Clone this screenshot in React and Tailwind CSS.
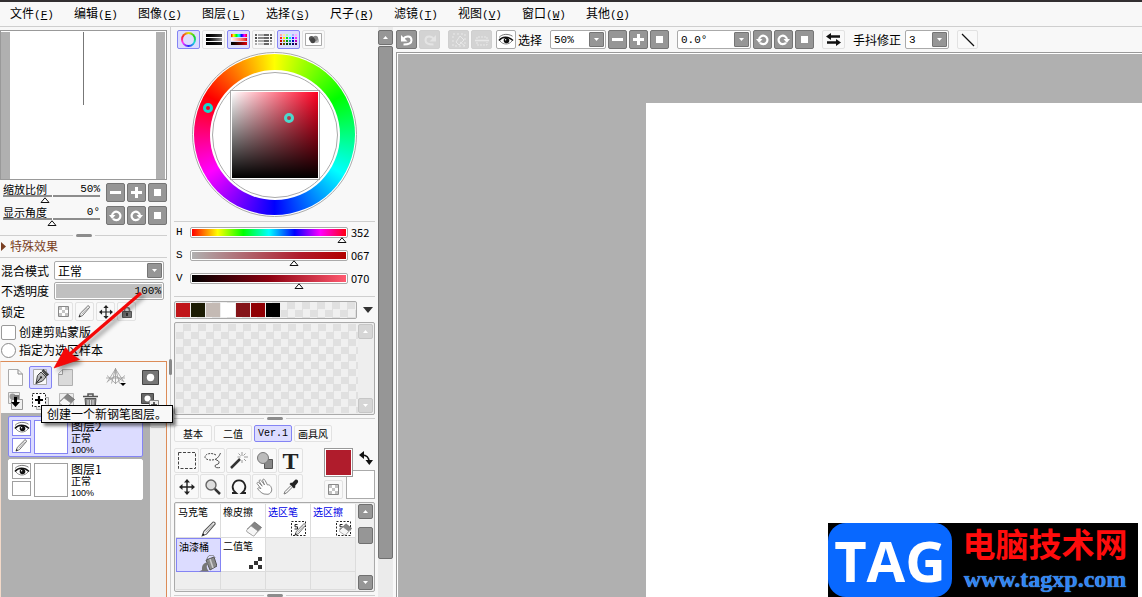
import React from "react";
import { clsx } from "clsx";

const MONO = "font-['Liberation_Mono','Noto_Sans_CJK_SC',monospace] text-[11px]";

/* ---------- icons ---------- */
function Svg({ w = 16, h = 16, className, children }) {
  return (
    <svg width={w} height={h} viewBox={`0 0 ${w} ${h}`} className={clsx("shrink-0", className)} fill="none" aria-hidden="true">
      {children}
    </svg>
  );
}

const Minus = () => (<Svg w={11} h={11}><path d="M0 4h11v3H0z" fill="#fff" /></Svg>);
const Plus = () => (<Svg w={11} h={11}><path d="M0 4h4V0h3v4h4v3H7v4H4V7H0z" fill="#fff" /></Svg>);
const Stop = () => (<Svg w={11} h={11}><path d="M2 2h7v7H2z" fill="#fff" /></Svg>);
const RotateL = () => (
  <Svg w={13} h={13}><path d="M3 6.500a4.200 4.200 0 1 1 1 3.200" stroke="#fff" strokeWidth="2.200" /><path d="M0 6h6.500L3.200 10z" fill="#fff" /></Svg>
);
const RotateR = () => (
  <Svg w={13} h={13}><path d="M10 6.500a4.200 4.200 0 1 0-1 3.200" stroke="#fff" strokeWidth="2.200" /><path d="M13 6H6.500l3.300 4z" fill="#fff" /></Svg>
);
const Undo = ({ flip, color = "#fff" }) => (
  <Svg w={14} h={12} className={flip ? "-scale-x-100" : ""}>
    <path d="M1 1v6.500h6.500z" fill={color} />
    <path d="M3 5.500C5.500 1.500 11.500 1.500 11.500 6.200c0 2.800-2 4.300-8 4.300" stroke={color} strokeWidth="2" />
  </Svg>
);
const Eye = () => (
  <Svg w={16} h={13}>
    <path d="M1 4.500C4 .8 10 .4 14.500 3.200" stroke="#777" />
    <path d="M1 7.500C4 3.500 10.500 3 15 7.500" stroke="#111" strokeWidth="1.600" />
    <path d="M2 8c3 4 9 4 12 0" stroke="#888" />
    <circle cx="8.500" cy="7.500" r="2.800" fill="#111" />
    <circle cx="7.600" cy="6.700" r=".7" fill="#fff" />
  </Svg>
);
const Pencil = ({ size = 14 }) => (
  <svg width={size} height={size} viewBox="0 0 14 14" fill="none" aria-hidden="true">
    <path d="M1 13l1.500-4L10.500 1c.8-.6 2.300.8 1.800 1.800L4.800 11.500z" fill="#f4f4f4" stroke="#555" strokeWidth=".9" />
    <path d="M1 13l.8-2.200 1.400 1.400z" fill="#111" />
    <path d="M4 10l6.500-7" stroke="#999" strokeWidth=".8" />
  </svg>
);
const Move = ({ size = 14 }) => (
  <svg width={size} height={size} viewBox="0 0 16 16" aria-hidden="true">
    <path d="M7.300 3v4.300H3v1.400h4.300V13h1.400V8.700H13V7.300H8.700V3z" fill="#222" />
    <path d="M8 0l3 3.500H5zM8 16l3-3.500H5zM0 8l3.500-3v6zM16 8l-3.500-3v6z" fill="#222" />
  </svg>
);
const Checker = () => (
  <Svg w={11} h={11}>
    <path d="M.5.5h10v10H.5z" fill="#fff" stroke="#888" />
    <path d="M1 1h3v3H1zM7 1h3v3H7zM4 4h3v3H4zM1 7h3v3H1zM7 7h3v3H7z" fill="#c4c4c4" />
  </Svg>
);
const Lock = () => (
  <Svg w={12} h={12}><path d="M3.500 6V4a2.500 2.500 0 0 1 5 0v2" stroke="#777" strokeWidth="1.600" /><path d="M1.500 5.500h9v6h-9z" fill="#777" stroke="#555" /><path d="M6 7v3" stroke="#222" strokeWidth="1.600" /></Svg>
);
const Page = ({ dim }) => (
  <Svg w={16} h={17}>
    {dim ? (
      <>
        <path d="M.5 4.500l4-4h10v16H.5z" fill="#dadada" stroke="#b0b0b0" />
        <path d="M.5 5.500h4v-5" fill="#eee" stroke="#999" />
      </>
    ) : (
      <>
        <path d="M.5.5h9.500l4.500 4.500v11.500H.5z" fill="#fcfcfc" stroke="#aaa" />
        <path d="M10 .5V5h4.500" stroke="#888" />
      </>
    )}
  </Svg>
);
const PenLayer = () => (
  <Svg w={18} h={18}>
    <path d="M1.500 1.500h13v15h-13z" fill="#fafafa" stroke="#aaa" />
    <path d="M11.500 1L17 6.500l-2.500 2L9.500 3z" fill="#333" />
    <path d="M11 2.800l4 4M12.200 1.800l4 4" stroke="#999" strokeWidth=".6" />
    <path d="M4 15.500l1.500-8L9 4l5 5-3.500 4z" fill="#b8b8b8" stroke="#444" />
    <path d="M4 15.500l4.500-5.500" stroke="#222" /><circle cx="9" cy="9.300" r="1.100" fill="#222" />
  </Svg>
);
const Perspective = () => (
  <Svg w={20} h={20}>
    <path d="M9.500 1v16M0 11h19M1 15.500L9.500 2 18 15M5.500 16.500l4-15 4 15M1 8.500l8.500 8L19 8.500M2 14l7.500-5 7.500 5" stroke="#999" strokeWidth=".8" />
    <path d="M14 16h6l-3 3z" fill="#000" />
  </Svg>
);
const Mask = () => (
  <Svg w={17} h={15}><path d="M.5.5h16v14H.5z" fill="#777" stroke="#444" /><circle cx="8.500" cy="7.500" r="3.700" fill="#fff" /></Svg>
);
const Transfer = () => (
  <Svg w={15} h={18}>
    <path d="M.5.500h11v11H.5z" fill="#eee" stroke="#aaa" /><circle cx="4.500" cy="4.500" r="3" fill="#999" /><path d="M6 3h5v4H6z" fill="#777" />
    <path d="M3.500 7.500h11v10h-11z" fill="#f0f0f0" stroke="#999" />
    <path d="M6 5h3v5h3l-4.500 5L3 10h3z" fill="#000" />
  </Svg>
);
const Merge = () => (
  <Svg w={17} h={17}>
    <path d="M4.500 4.500h12v12h-12z" fill="#e6e6e6" stroke="#aaa" /><path d="M.5.5h13v13H.5z" fill="#fff" stroke="#222" strokeDasharray="2 1.500" />
    <path d="M7 3v8M3 7h8" stroke="#000" strokeWidth="2.200" />
  </Svg>
);
const EraserShape = () => (
  <>
    <path d="M8.500 1l7 5.500-7 7L1.500 8z" fill="#858585" stroke="#666" strokeWidth=".8" />
    <path d="M5 4.800L12 10l-3.500 4.500c-.6.600-1.200.6-2 0L1 10.800c-.7-.6-.7-1.200 0-2z" fill="#f6f6f6" stroke="#888" strokeWidth=".8" />
    <path d="M9 14L12.200 10l3-3v1.500z" fill="#ccc" />
  </>
);
const Eraser = ({ size = 16 }) => (
  <svg width={size} height={size} viewBox="0 0 16 16" fill="none" aria-hidden="true"><EraserShape /></svg>
);
const PageEraser = () => (
  <Svg w={16} h={17}><path d="M.5.500h14v16H.5z" fill="#eee" stroke="#bbb" /><EraserShape /></Svg>
);
const Trash = () => (
  <Svg w={15} h={17}><path d="M0 3.500h15M5 3V1h5v2" stroke="#555" strokeWidth="1.500" /><path d="M2 5.500h11l-1 11H3z" fill="#888" stroke="#555" /><path d="M5 7v9M7.500 7v9M10 7v9" stroke="#ddd" /></Svg>
);
const MaskAdd = () => (
  <Svg w={19} h={17}><path d="M.5.5h12v10H.5z" fill="#666" stroke="#444" /><circle cx="6.500" cy="5.500" r="3" fill="#fff" /><path d="M8.500 7.500h9v9h-9z" fill="#eee" stroke="#888" /><path d="M13 9v6M10 12h6" stroke="#333" strokeWidth="1.500" /></Svg>
);

/* color panel toggles */
const RingIcon = () => (
  <span className="grid size-[15px] place-items-center rounded-full bg-[conic-gradient(#dfe000,#19d219,#19dada,#2a2aff,#ff37ff,#ff2020,#dfe000)]">
    <span className="size-[11px] rounded-full bg-[#dedcff]" />
  </span>
);
const Bars = () => (
  <span className="flex w-4 flex-col gap-px">
    <i className="h-[3px] bg-linear-to-r from-black to-[#444]" />
    <i className="h-[3px] bg-linear-to-r from-black to-[#999]" />
    <i className="h-[3px] bg-linear-to-r from-black to-[#222]" />
  </span>
);
const ColorBars = () => (
  <span className="flex w-4 flex-col gap-px">
    <i className="h-[3px] bg-[linear-gradient(90deg,red,yellow,lime,cyan,blue,magenta,red)]" />
    <i className="h-[3px] bg-linear-to-r from-white to-red-600" />
    <i className="h-[3px] bg-linear-to-r from-black to-red-600" />
  </span>
);
const MixBars = () => (
  <Svg w={17} h={11}>
    {[0, 3, 6, 9].map((y, i) => (
      <g key={y}>
        <path d={`M0 ${y}h2v2H0zM15 ${y}h2v2h-2z`} fill={["#666", "#444", "#888", "#aaa"][i]} />
        <path d={`M3 ${y}h6v2H3z`} fill={["#aaa", "#888", "#aaa", "#ccc"][i]} />
        <path d={`M9 ${y}h5v2H9z`} fill="#666" />
      </g>
    ))}
  </Svg>
);
const DOTS = [
  ["#faa", "#fe9", "#afa", "#aff", "#aaf", "#faf"],
  ["#f22", "#fe0", "#0e0", "#0ee", "#22f", "#f2f"],
  ["#c00", "#a90", "#090", "#099", "#00b", "#b0b"],
  ["#700", "#550", "#040", "#044", "#006", "#404"],
];
const DotGrid = () => (
  <Svg w={17} h={11}>
    {DOTS.map((row, r) => row.map((c, i) => <rect key={`${r}${i}`} x={i * 3} y={r * 3} width="2" height="2" fill={c} />))}
  </Svg>
);
const Scratch = () => (
  <Svg w={17} h={13}>
    <path d="M.5.5h16v12H.5z" fill="#fff" stroke="#aaa" />
    <circle cx="11.500" cy="7.500" r="2.500" fill="#bbb" /><circle cx="10.500" cy="5.300" r="2.600" fill="#888" /><circle cx="6.500" cy="5.500" r="2.600" fill="#555" /><circle cx="7.800" cy="7.600" r="2.600" fill="#444" />
  </Svg>
);

/* tools */
const Marquee = () => (<Svg w={18} h={17}><path d="M.5.5h17v16H.5z" stroke="#444" strokeDasharray="3 1.500" /></Svg>);
const Lasso = () => (
  <Svg w={18} h={17}><path d="M12 3C7 0 1 2 1 5s7 4 11 2" stroke="#444" strokeDasharray="2 1" /><path d="M16.500 1c-1 3-3 5-5 6.500 2 1 4 1.500 3.500 3.500s-4 1-4 3 3 2 5 1.500" stroke="#555" /></Svg>
);
const Wand = () => (
  <Svg w={18} h={17}><path d="M1 16L10 7" stroke="#333" strokeWidth="2.500" /><path d="M12 0v4M12 8v3M7.500 5h3M14 5h4M8.500 1.500l2 2M15.500 1.500l-2 2M14 7l2 2" stroke="#999" /></Svg>
);
const Shapes = () => (<Svg w={18} h={17}><path d="M8.500 7.500h8v9h-8z" fill="#888" stroke="#555" /><circle cx="7" cy="6" r="5.500" fill="#bbb" stroke="#777" /></Svg>);
const TextTool = () => (<span className="font-['Liberation_Serif',serif] text-2xl leading-none font-bold text-[#222]">T</span>);
const Magnify = () => (<Svg><circle cx="6" cy="6" r="5" fill="#ddd" stroke="#666" strokeWidth="1.400" /><path d="M9.800 9.800L15 15" stroke="#333" strokeWidth="2.500" /></Svg>);
const RotateView = () => (<Svg><path d="M1 14h4c-3-2.500-4-5-3-8C4-.2 12-.2 14 6c1 3 0 5.500-3 8h4" stroke="#222" strokeWidth="1.800" /></Svg>);
const Hand = () => (
  <Svg w={17} h={17}><path d="M8 16C5 15 3 12.500 1.500 10.500c.5-1 2-.8 3.500.3L1 5.500C1 4 2.200 4 3.200 5l3 3.200L3 3c.2-1.500 1.600-1.300 2.400-.2L8.600 7 6.500 2c.5-1.300 1.900-1 2.500.3L11.500 7c1-.5 2.500 0 3.300 1.500.9 1.900 1.200 3 .7 4.500-.5 1.600-1.500 2.800-3.500 3.300z" fill="#fff" stroke="#888" /></Svg>
);
const Dropper = () => (<Svg><path d="M9 4l3-3c2-1.500 4 1 2.700 2.700L12 7l.5 1-1.500 1.500L6.500 5 8 3.500z" fill="#222" /><path d="M8 6.500L2 12.500 1 15l2.500-1 6-6" stroke="#777" /></Svg>);
const SwapColors = () => (
  <Svg w={14} h={14}><path d="M3 4c5 0 7 2 7 7" stroke="#111" strokeWidth="1.500" /><path d="M0 4l5-4v8zM6.500 9h7.500l-3.700 5z" fill="#111" /></Svg>
);
const Bucket = () => (
  <Svg w={18} h={17}><path d="M7 5l8-3 3 9-7 4z" fill="#8a8a8a" stroke="#555" /><path d="M11 4l3 9" stroke="#ccc" strokeWidth="1.500" /><path d="M8 4c1-5 7-5 8-1" stroke="#777" /><path d="M10 7C3 8 3 11 3 15l-3 1.500h10C7 13 7 10 10 7z" fill="#777" /></Svg>
);
const SelMark = ({ children }) => (
  <span className="relative grid size-4 place-items-center">
    <Svg w={16} h={16}><path d="M.5.5h14v14H.5z" stroke="#222" strokeDasharray="2 1.500" /><path d="M6.500 3.500H4v2.300h2.500V8H3.500" stroke="#222" /></Svg>
    <span className="absolute top-0.5 left-[3px]">{children}</span>
  </span>
);
const Binary = () => (<Svg w={13} h={12}><path d="M9 0h4v4H9zM5 4h4v4H5zM0 8h4v4H0zM9 8h4v4H9z" fill="#333" /></Svg>);

/* ---------- controls ---------- */
function DarkButton({ label, children, faded, wide }) {
  return (
    <button
      type="button"
      aria-label={label}
      disabled={faded}
      className={clsx(
        "grid h-[19px] shrink-0 place-items-center rounded-xs border",
        wide ? "w-[21px]" : "w-[19px]",
        faded ? "border-[#cfcfcf] bg-[#d3d3d3]" : "border-[#757575] bg-[#969696]"
      )}
    >
      {children}
    </button>
  );
}

function FlatButton({ label, children, active, className }) {
  return (
    <button
      type="button"
      aria-label={label}
      className={clsx("grid shrink-0 place-items-center rounded-xs border", active ? "border-[#8484f4] bg-[#dcdcff]" : "border-[#e2e2e2] bg-[#f9f9f9]", className)}
    >
      {children}
    </button>
  );
}

function Select({ label, value, className, textClass }) {
  return (
    <span className={clsx("relative h-[19px] shrink-0 rounded-xs border border-[#aaa] bg-white", className)}>
      <select aria-label={label} defaultValue={value} className={clsx("block h-full w-full appearance-none bg-transparent pl-[3px] leading-4 outline-none", textClass)}>
        <option>{value}</option>
      </select>
      <span className="pointer-events-none absolute top-px right-px grid size-[15px] place-items-center rounded-[1px] border border-[#757575] bg-[#969696]">
        <Svg w={5} h={3}><path d="M0 0h5L2.500 3z" fill="#fff" /></Svg>
      </span>
    </span>
  );
}

function Range({ label, value, max, className, children }) {
  return (
    <span className={clsx("relative block", className)}>
      {children}
      <svg width="10" height="6" viewBox="0 0 10 6" className="absolute top-full -ml-[5px]" style={{ left: `${(value / max) * 100}%` }} aria-hidden="true">
        <path d="M5 .8L9 5.500H1z" fill="#fff" stroke="#111" />
      </svg>
      <input type="range" aria-label={label} defaultValue={value} max={max} className="absolute inset-0 h-full w-full cursor-pointer opacity-0" />
    </span>
  );
}

function Grip({ className }) {
  return (
    <div className={clsx("flex h-[3px] items-center gap-[3px]", className)}>
      <i className="h-px flex-1 bg-[#cfcfcf]" />
      <i className="h-[3px] w-4 rounded-full bg-[#8c8c8c]" />
      <i className="h-px flex-1 bg-[#cfcfcf]" />
    </div>
  );
}

function ScrollArrow({ down, dim }) {
  return (
    <button
      type="button"
      aria-label={down ? "向下滚动" : "向上滚动"}
      className={clsx("grid h-[15px] w-[15px] shrink-0 place-items-center rounded-xs border", dim ? "border-[#c6c6c6] bg-[#d6d6d6]" : "border-[#707070] bg-[#969696]")}
    >
      <Svg w={5} h={3} className={down ? "rotate-180" : ""}><path d="M0 3h5L2.500 0z" fill="#fff" /></Svg>
    </button>
  );
}

/* ---------- menu ---------- */
const MENUS = [["文件", "F"], ["编辑", "E"], ["图像", "C"], ["图层", "L"], ["选择", "S"], ["尺子", "R"], ["滤镜", "T"], ["视图", "V"], ["窗口", "W"], ["其他", "O"]];

function MenuBar() {
  return (
    <nav className="flex h-[27px] shrink-0 items-center border-t-2 border-b border-t-[#322f31] border-b-[#cfcfcf]">
      {MENUS.map(([name, key]) => (
        <button key={key} type="button" className="w-16 whitespace-nowrap">
          {name}<span className={MONO}>(<u>{key}</u>)</span>
        </button>
      ))}
    </nav>
  );
}

/* ---------- navigator and layers ---------- */
function NavRow({ label, value, pos, children }) {
  return (
    <div className="flex h-5 justify-between pl-[3px]">
      <div className="w-[97px]">
        <div className="flex h-3 items-center justify-between text-[11px]">
          <span>{label}</span><span className={MONO}>{value}</span>
        </div>
        <Range label={label} value={pos} max={100} className="h-0.5 bg-[#8d8d8d]">
          <i className="absolute left-1/2 h-0.5 w-px bg-white" />
        </Range>
      </div>
      <div className="flex gap-0.5">{children}</div>
    </div>
  );
}

function LayerItem({ name, active, pencil }) {
  const edge = active ? "border-[#8484f4]" : "border-[#a0a0a0]";
  return (
    <li className={clsx("flex h-[41px] w-[135px] gap-[3px] rounded-xs border p-[3px]", active ? "border-[#8484f4] bg-[#dcdcff]" : "border-white bg-white")}>
      <div className="flex flex-col gap-0.5">
        <button type="button" aria-label={`显示${name}`} className={clsx("grid h-4 w-[19px] place-items-center border bg-white", edge)}><Eye /></button>
        <button type="button" aria-label={`编辑${name}`} className={clsx("grid h-4 w-[19px] place-items-center border bg-white", edge)}>{pencil && <Pencil size={13} />}</button>
      </div>
      <span className={clsx("h-[34px] w-[34px] border bg-white", edge)} />
      <div className="flex flex-col leading-3">
        <span>{name}</span>
        <span className="text-[10px]">正常</span>
        <span className="font-['Liberation_Sans',sans-serif] text-[9px]">100%</span>
      </div>
    </li>
  );
}

function LeftPanel() {
  return (
    <aside className="flex w-[170px] shrink-0 flex-col pt-[3px] pr-[3px]">
      <div className="flex h-[150px] shrink-0 border border-[#999] bg-white pt-px pr-px">
        <div className="flex flex-1 bg-[#b0b0b0] px-[9px]">
          <div className="flex-1 bg-white"><div className="mx-auto h-[73px] w-px bg-[#777]" /></div>
        </div>
      </div>
      <div className="mt-[3px] flex flex-col gap-[3px]">
        <NavRow label="缩放比例" value="50%" pos={43}>
          <DarkButton label="缩小"><Minus /></DarkButton><DarkButton label="放大"><Plus /></DarkButton><DarkButton label="重置缩放"><Stop /></DarkButton>
        </NavRow>
        <NavRow label="显示角度" value="0°" pos={50}>
          <DarkButton label="向左旋转"><RotateL /></DarkButton><DarkButton label="向右旋转"><RotateR /></DarkButton><DarkButton label="重置角度"><Stop /></DarkButton>
        </NavRow>
      </div>
      <Grip className="mt-2 shrink-0" />
      <button type="button" className="flex h-5 shrink-0 items-center gap-1 pb-0.5 pl-px text-[#7a3f22]">
        <Svg w={5} h={9}><path d="M0 0l5 4.500L0 9z" fill="#7a3f22" /></Svg>特殊效果
      </button>
      <div className="flex shrink-0 flex-col gap-0.5 border-t border-[#cfcfcf] pt-[3px] pr-[3px] pl-px">
        <div className="flex items-center justify-between">
          <span>混合模式</span><Select label="混合模式" value="正常" className="w-[110px]" />
        </div>
        <div className="flex items-center justify-between">
          <span>不透明度</span>
          <span className="relative flex h-[18px] w-[110px] items-center justify-end rounded-xs border border-[#aaa] bg-white p-px">
            <span className={clsx(MONO, "flex h-full flex-1 items-center justify-end bg-[#c0c0c0] pr-px")}>100%</span>
            <input type="range" aria-label="不透明度" defaultValue={100} className="absolute inset-0 h-full w-full opacity-0" />
          </span>
        </div>
        <div className="flex items-center gap-0.5">
          <span className="w-[51px]">锁定</span>
          <FlatButton label="锁定透明" className="size-[19px]"><Checker /></FlatButton>
          <FlatButton label="锁定绘图" className="size-[19px]"><Pencil size={13} /></FlatButton>
          <FlatButton label="锁定移动" className="size-[19px]"><Move /></FlatButton>
          <FlatButton label="全部锁定" className="size-[19px]"><Lock /></FlatButton>
        </div>
        <div>
          <label className="flex h-[18px] items-center gap-[3px]"><input type="checkbox" className="size-[15px] appearance-none rounded-xs border border-[#999] bg-white" />创建剪贴蒙版</label>
          <label className="flex h-[18px] items-center gap-[3px]"><input type="radio" className="size-[15px] appearance-none rounded-full border border-[#888] bg-white" />指定为选区样本</label>
        </div>
      </div>
      <section className="mt-0.5 flex min-h-0 flex-1 flex-col border border-b-0 border-[#dc8c58] border-l-[#f3d9c8]">
        <div className="flex h-[27px] shrink-0 items-center pt-[3px] pl-1">
          <button type="button" aria-label="新建图层" className="grid h-[23px] w-6 pt-[3px] pl-[3px]"><Page /></button>
          <FlatButton label="创建一个新钢笔图层" active className="h-[23px] w-[23px]"><PenLayer /></FlatButton>
          <button type="button" aria-label="新建图层组" className="grid h-[23px] w-6 pt-[3px] pl-1.5"><Page dim /></button>
          <button type="button" aria-label="透视尺" className="ml-[30px]"><Perspective /></button>
          <button type="button" aria-label="图层蒙版" className="ml-4"><Mask /></button>
        </div>
        <div className="flex h-6 shrink-0 items-center pl-[7px]">
          <button type="button" aria-label="转写"><Transfer /></button>
          <button type="button" aria-label="合并" className="ml-[9px]"><Merge /></button>
          <button type="button" aria-label="清除" className="ml-2.5"><PageEraser /></button>
          <button type="button" aria-label="删除" className="ml-2"><Trash /></button>
          <button type="button" aria-label="添加蒙版" className="ml-[43px]"><MaskAdd /></button>
        </div>
        <div className="flex min-h-0 flex-1">
          <ul className="flex flex-1 flex-col gap-0.5 bg-[#b0b0b0] pt-[3px] pl-[7px]">
            <LayerItem name="图层2" active pencil />
            <LayerItem name="图层1" />
          </ul>
          <div className="w-4 bg-[#f0f0f0]"><div className="h-[15px] rounded-xs border border-[#cfcfcf] bg-[#ddd]" /></div>
        </div>
      </section>
    </aside>
  );
}

/* ---------- colour and brush panel ---------- */
function ColorWheel() {
  return (
    <div className="mx-auto mt-[3px] grid size-[165px] shrink-0 place-items-center rounded-full border border-[#aaa] bg-white">
      <div className="grid size-[161px] place-items-center rounded-full bg-[conic-gradient(#ff0,#0f0,#0ff,#00f,#f0f,#f00,#ff0)]">
        <div className="grid size-[130px] place-items-center rounded-full bg-white">
          <div className="grid size-[126px] place-items-center rounded-full border border-[#aaa]">
            <div className="size-[90px] border border-[#aaa] bg-white p-px">
              <div className="relative size-full bg-[linear-gradient(to_top,#000,transparent),linear-gradient(to_right,#fff,#ff0022)]">
                <i className="absolute top-[31%] left-[67%] size-[10px] -translate-x-1/2 -translate-y-1/2 rounded-full border-[3px] border-[#4cd8cc]" />
              </div>
            </div>
          </div>
        </div>
        <i className="absolute -mt-[53px] -ml-[134px] size-[10px] rounded-full border-[3px] border-[#14d8cc]" />
      </div>
    </div>
  );
}

const CHANNELS = [
  ["H", "352", 97, "bg-[linear-gradient(90deg,red,yellow,lime,cyan,blue,magenta,#f01)]"],
  ["S", "067", 66, "bg-[linear-gradient(90deg,#b0b0b0,#b01c2c_70%,#b20000)]"],
  ["V", "070", 69, "bg-[linear-gradient(90deg,#000,#8c0010_50%,#ff5a70)]"],
];
const SWATCHES = ["bg-[#c01418]", "bg-[#1c1c04]", "bg-[#c4bab4]", "bg-white", "bg-[#841418]", "bg-[#900004]", "bg-black"];
const CHECKS = "bg-[repeating-conic-gradient(#e0e0e0_0_25%,#f0f0f0_0_50%)] bg-size-[15px_15px]";
const TOGGLES = [["色轮", RingIcon, true], ["RGB滑块", Bars], ["HSV滑块", ColorBars, true], ["中间色", MixBars], ["调色板", DotGrid, true], ["便笺", Scratch]];
const TOOLS = [["选框", Marquee], ["套索", Lasso], ["魔棒", Wand], ["形状", Shapes], ["文字", TextTool], ["移动", () => <Move size={16} />], ["缩放", Magnify], ["旋转", RotateView], ["抓手", Hand], ["吸管", Dropper]];
const BRUSHES = [
  ["马克笔", <Pencil size={16} />],
  ["橡皮擦", <Eraser />],
  ["选区笔", <SelMark><Pencil size={13} /></SelMark>, "link"],
  ["选区擦", <SelMark><Eraser size={13} /></SelMark>, "link"],
  ["油漆桶", <Bucket />, "active"],
  ["二值笔", <Binary />],
];

function MiddlePanel() {
  return (
    <section className="flex w-[208px] shrink-0 flex-col border-l border-[#cfcfcf] pt-[3px] pr-[3px] pl-[3px]">
      <div className="flex shrink-0 gap-0.5 pl-[3px]">
        {TOGGLES.map(([label, Icon, on]) => (
          <FlatButton key={label} label={label} active={on} className="h-[19px] w-[23px]"><Icon /></FlatButton>
        ))}
      </div>
      <ColorWheel />
      <div className="mt-1 border-t border-[#cfcfcf] pb-[5px]">
        {CHANNELS.map(([name, value, pos, fill]) => (
          <div key={name} className="flex h-[23px] items-start pt-[5px]">
            <span className={clsx(MONO, "w-4 pl-0.5 leading-[11px]")}>{name}</span>
            <Range label={name} value={pos} max={100} className="h-[11px] w-[158px] rounded-xs border border-[#aaa] bg-white p-px">
              <i className={clsx("block h-full", fill)} />
            </Range>
            <span className="pl-[3px] text-[11px] leading-[10px]">{value}</span>
          </div>
        ))}
      </div>
      <div className="flex items-center gap-1.5 border-t border-[#cfcfcf] pt-1">
        <div className={clsx("flex h-[18px] w-[183px] rounded-xs border border-[#aaa] p-px", CHECKS)}>
          {SWATCHES.map((c) => <button key={c} type="button" aria-label="色板颜色" className={clsx("w-[15px] border-r border-[#eee]", c)} />)}
        </div>
        <button type="button" aria-label="色板菜单"><Svg w={10} h={6}><path d="M0 0h10L5 6z" fill="#333" /></Svg></button>
      </div>
      <div className="mt-[3px] flex h-[93px] shrink-0 rounded-xs border border-[#aaa] bg-[#eee] p-px">
        <div className={clsx("flex-1", CHECKS)} />
        <div className="flex flex-col justify-between"><ScrollArrow dim /><ScrollArrow down dim /></div>
      </div>
      <Grip className="mt-0.5 shrink-0" />
      <div className="mt-[5px] flex shrink-0 gap-0.5 text-[10px]" role="tablist">
        {["基本", "二值", "Ver.1", "画具风"].map((t) => {
          const on = t === "Ver.1";
          return (
            <button key={t} type="button" role="tab" aria-selected={on} className={clsx("h-[17px] w-[38px] rounded-xs border leading-[15px] whitespace-nowrap", on ? "border-[#8484f4] bg-[#dcdcff] font-['Liberation_Mono',monospace]" : "border-[#e2e2e2] bg-[#fafafa]")}>{t}</button>
          );
        })}
      </div>
      <div className="mt-1.5 flex shrink-0 justify-between">
        <div className="grid grid-cols-5 gap-px">
          {TOOLS.map(([label, Icon]) => <FlatButton key={label} label={label} className="size-[25px]"><Icon /></FlatButton>)}
        </div>
        <div className="relative h-[51px] w-[51px]">
          <button type="button" aria-label="背景色" className="absolute right-0 bottom-0 size-[29px] border border-[#aaa] bg-white" />
          <button type="button" aria-label="前景色" className="absolute top-0 left-0 size-[29px] border border-[#999] bg-[#b01c2c] p-px shadow-[inset_0_0_0_1px_#fff]" />
          <button type="button" aria-label="交换颜色" className="absolute top-[3px] right-0.5"><SwapColors /></button>
          <FlatButton label="透明色" className="absolute bottom-0 left-0 h-[19px] w-[19px]"><Checker /></FlatButton>
        </div>
      </div>
      <div className="mt-[3px] flex h-[90px] shrink-0 rounded-xs border border-[#aaa] bg-[#eee] p-px">
        <div className="grid flex-1 grid-cols-4 grid-rows-[34px_34px_18px] overflow-hidden text-[10px] leading-[16px]">
          {Array.from({ length: 12 }, (_, i) => {
            const b = BRUSHES[i];
            if (!b) return <span key={i} className="border-r border-b border-[#dcdcdc]" />;
            const on = b[2] === "active";
            return (
              <button key={i} type="button" className={clsx("flex flex-col items-stretch border-r border-b text-left", on ? "border border-[#8484f4] bg-[#dcdcff]" : "border-[#dcdcdc] bg-white", b[2] === "link" && "text-[#0000e6]")}>
                <span className="pl-0.5 whitespace-nowrap">{b[0]}</span>
                <span className="flex flex-1 items-center justify-end pr-[3px]">{b[1]}</span>
              </button>
            );
          })}
        </div>
        <div className="flex flex-col bg-[#f0f0f0] pl-0.5">
          <ScrollArrow /><i className="mt-2 h-[17px] rounded-xs border border-[#707070] bg-[#969696]" /><span className="flex-1" /><ScrollArrow down />
        </div>
      </div>
      <Grip className="mt-0.5 shrink-0" />
    </section>
  );
}

/* ---------- canvas ---------- */
function Toolbar() {
  return (
    <div className="flex h-[25px] shrink-0 items-center whitespace-nowrap">
      <div className="flex gap-0.5">
        <DarkButton label="撤销" wide><Undo /></DarkButton>
        <DarkButton label="重做" wide faded><Undo flip color="#e4e4e4" /></DarkButton>
      </div>
      <div className="ml-2 flex gap-0.5">
        <DarkButton label="取消选择" wide faded><Svg w={14} h={14}><path d="M1 1h12v12H1z" stroke="#e8e8e8" strokeDasharray="2 2" /><path d="M8 3l4 4-5 5-3-3zM8 9l5 4" stroke="#e8e8e8" /></Svg></DarkButton>
        <DarkButton label="反选" wide faded><Svg w={14} h={14}><path d="M2 6V4h10v2M2 9v3h10V9" stroke="#e8e8e8" strokeDasharray="2 1" /><path d="M0 7.500h14" stroke="#e8e8e8" strokeWidth="1.500" /></Svg></DarkButton>
      </div>
      <div className="ml-1 flex items-center gap-0.5">
        <button type="button" aria-label="显示选区" className="grid h-[19px] w-5 place-items-center rounded-xs border border-[#aaa] bg-white"><Eye /></button>选择
      </div>
      <Select label="缩放" value="50%" className="ml-2 w-14" textClass={MONO} />
      <div className="ml-0.5 flex gap-0.5">
        <DarkButton label="缩小"><Minus /></DarkButton><DarkButton label="放大"><Plus /></DarkButton><DarkButton label="重置缩放"><Stop /></DarkButton>
      </div>
      <Select label="角度" value="0.0°" className="ml-2 w-[74px]" textClass={MONO} />
      <div className="ml-0.5 flex gap-0.5">
        <DarkButton label="向左旋转"><RotateL /></DarkButton><DarkButton label="向右旋转"><RotateR /></DarkButton><DarkButton label="重置角度"><Stop /></DarkButton>
      </div>
      <FlatButton label="水平翻转" className="ml-2 h-[19px] w-[23px]">
        <Svg w={15} h={13}><path d="M4 3.500h10M1 9.500h10" stroke="#111" strokeWidth="2.500" /><path d="M0 3.500L5 0v7zM15 9.500L10 6v7z" fill="#111" /></Svg>
      </FlatButton>
      <span className="ml-2">手抖修正</span>
      <Select label="手抖修正" value="3" className="ml-1 w-11" textClass={MONO} />
      <FlatButton label="直线" className="ml-2 h-[19px] w-[21px]"><Svg w={14} h={14}><path d="M1 1l12 12" stroke="#111" strokeWidth="1.200" /></Svg></FlatButton>
    </div>
  );
}

function SiteBanner() {
  return (
    <a href="#" className="absolute right-1 bottom-0 flex h-[74px] w-[310px] items-center bg-black">
      <span className="grid h-full w-[124px] place-items-center rounded-[18px] bg-[#0868ff] font-['Open_Sans',sans-serif] text-[56px] leading-none font-bold text-white">TAG</span>
      <span className="flex flex-1 flex-col items-center whitespace-nowrap">
        <span className="h-[38px] text-[33px] leading-8 font-bold text-[#ff0c0c]">电脑技术网</span>
        <span className="font-['Liberation_Serif',serif] text-2xl leading-7 font-bold text-[#2c86f4] [text-shadow:0_0_1px_#9cc8ff]">www.tagxp.com</span>
      </span>
    </a>
  );
}

export default function App() {
  return (
    <div className="relative flex h-screen flex-col overflow-hidden bg-[#f8f8f8] font-['Noto_Sans_CJK_SC',sans-serif] text-xs leading-4 text-black select-none">
      <MenuBar />
      <div className="flex min-h-0 flex-1">
        <LeftPanel />
        <MiddlePanel />
        <div className="mr-[3px] flex w-[15px] shrink-0 flex-col gap-px bg-[#ebebeb] pt-[3px]">
          <ScrollArrow />
          <div className="mb-[38px] flex-1 rounded-xs border border-[#707070] bg-[#969696]" />
        </div>
        <main className="flex min-w-0 flex-1 flex-col">
          <Toolbar />
          <div className="flex min-h-0 flex-1 border-t border-l border-[#999] bg-white pt-px pl-px">
            <div className="flex flex-1 bg-[#b0b0b0] pt-[49px] pl-[248px]"><div className="flex-1 bg-white" /></div>
          </div>
        </main>
      </div>
      <i className="absolute top-[359px] left-[169px] h-4 w-[3px] rounded-full bg-[#888]" />
      <div role="tooltip" className="absolute top-[405px] left-[41px] h-[18px] w-[132px] border border-black bg-[#f8f8f8] pl-[5px] whitespace-nowrap shadow-[3px_3px_3px_rgba(0,0,0,0.5)]">创建一个新钢笔图层。</div>
      <svg width="96" height="84" viewBox="0 0 96 84" className="pointer-events-none absolute top-[288px] left-[50px] drop-shadow-[3px_3px_2px_rgba(0,0,0,0.4)]" aria-hidden="true">
        <path d="M91 5L20 66" stroke="#f40808" strokeWidth="3.200" /><path d="M4 80L15.500 59.500 20.500 65.500 29.500 71.500z" fill="#f40808" stroke="#e00" strokeWidth=".6" />
      </svg>
      <SiteBanner />
    </div>
  );
}
